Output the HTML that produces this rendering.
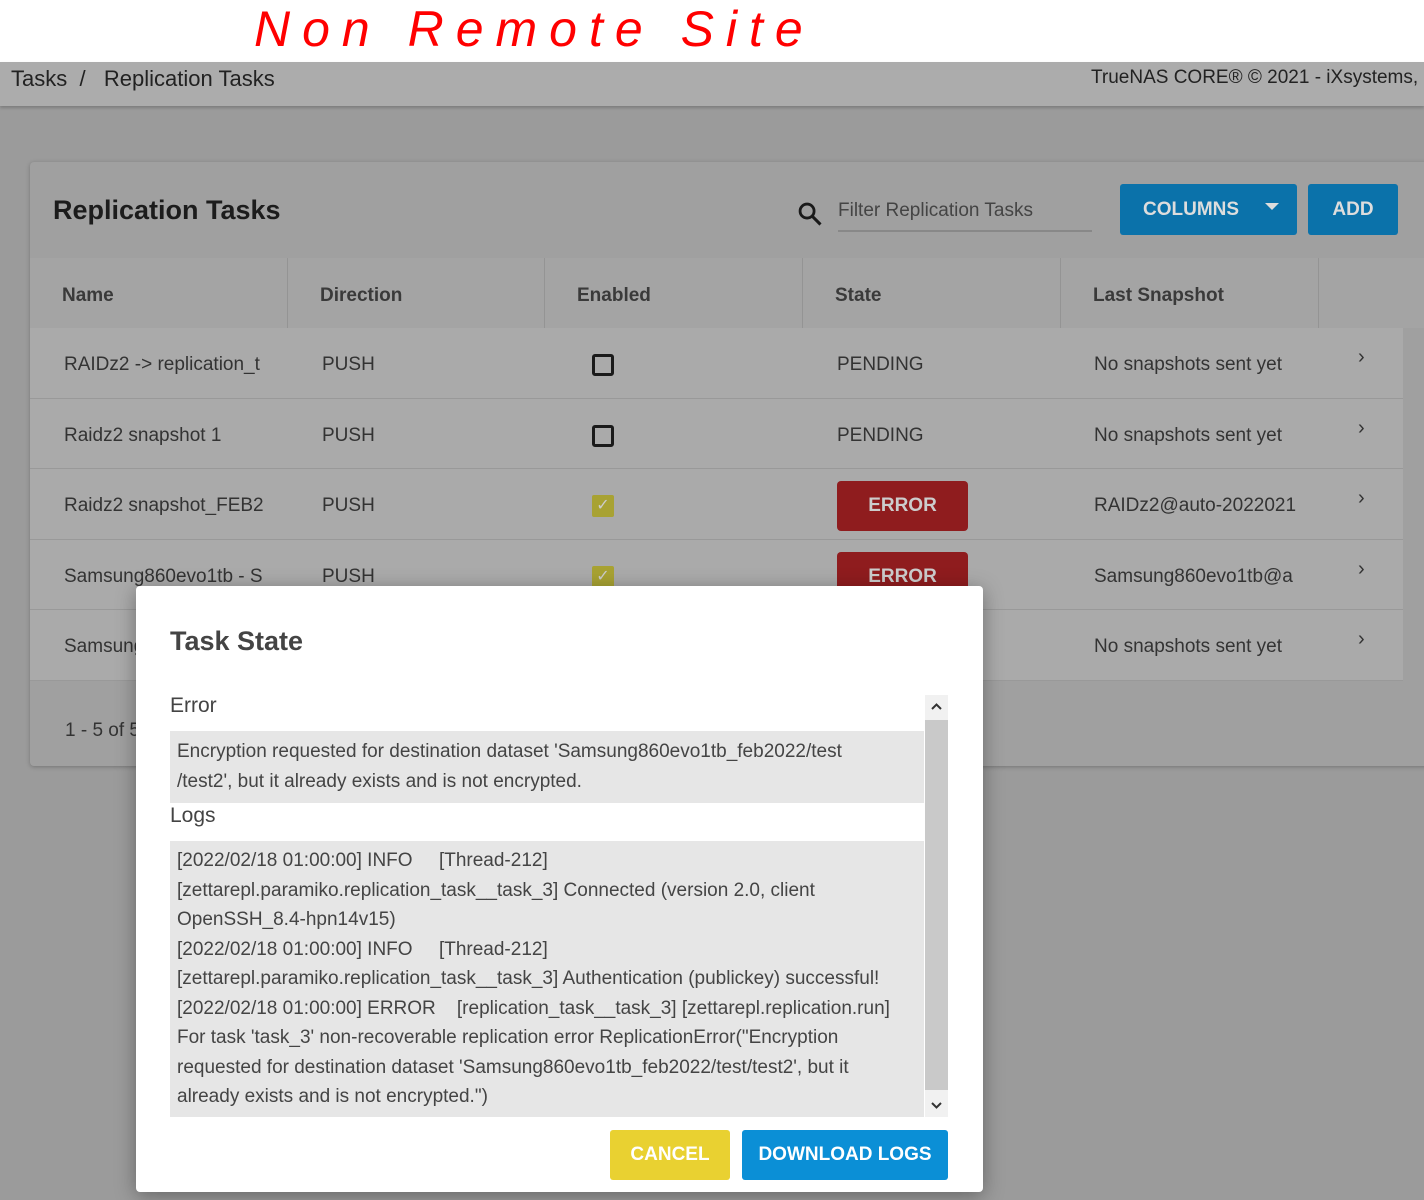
<!DOCTYPE html>
<html><head><meta charset="utf-8"><style>
*{box-sizing:border-box;margin:0;padding:0}
body{width:1424px;height:1200px;overflow:hidden;background:#9b9b9b;font-family:"Liberation Sans",sans-serif;position:relative;color:#222}
.abs{position:absolute}
#top{left:0;top:0;width:1424px;height:62px;background:#fff}
#hand{left:254px;top:0px;font-family:"Liberation Sans",sans-serif;font-size:50px;color:#f00;letter-spacing:12px;font-style:italic;font-weight:normal;-webkit-text-stroke:0px}
#bar{left:0;top:62px;width:1424px;height:44px;background:#acacac;box-shadow:0 2px 3px rgba(0,0,0,.2);font-size:22px;color:#222}
#card{left:30px;top:162px;width:1400px;height:604px;background:#a0a0a0;border-radius:4px;box-shadow:0 1px 4px rgba(0,0,0,.25);overflow:hidden}
.th{position:absolute;top:96px;height:70px;background:#a4a4a4;border-right:1px solid #949494;font-size:19px;font-weight:bold;color:#3a3a3a;padding:27px 0 0 32px}
.row{position:absolute;left:0;width:1373px;background:#aaa;border-bottom:1px solid #999;font-size:19px;color:#333}
.row span{position:absolute;top:26px}
.cb{position:absolute;left:562px;top:26px;width:22px;height:22px;border:3px solid #1a1a1a;border-radius:3px}
.cbc{position:absolute;left:562px;top:26px;width:22px;height:22px;background:#a8a233;border-radius:2px;color:#ccc;font-size:16px;text-align:center;line-height:22px}
.err{position:absolute;left:807px;top:12px;width:131px;height:50px;background:#8f1c1e;border-radius:4px;color:#ccc;font-size:19px;font-weight:bold;text-align:center;line-height:50px}
.chev{position:absolute;left:1328px;top:18px;font-size:20px;color:#333}
#dlg{left:136px;top:586px;width:847px;height:606px;background:#fff;border-radius:4px;box-shadow:0 4px 20px rgba(0,0,0,.35)}
.lbl{position:absolute;left:34px;font-size:21px;color:#444}
.box{position:absolute;left:34px;width:754px;background:#e6e6e6;font-size:19px;line-height:29.5px;color:#444;padding:6px 7px;white-space:nowrap}
.btn{position:absolute;top:544px;height:50px;border-radius:3px;font-size:19px;font-weight:bold;color:#fff;text-align:center;line-height:50px}
</style></head><body>
<div id="top" class="abs"></div>
<div id="hand" class="abs">Non Remote Site</div>
<div id="bar" class="abs"><span class="abs" style="left:11px;top:4px">Tasks&nbsp; /&nbsp;&nbsp; Replication Tasks</span><span class="abs" style="left:1091px;top:5px;font-size:19px;white-space:nowrap">TrueNAS CORE® © 2021 - iXsystems, Inc.</span></div>
<div id="card" class="abs">
 <div class="abs" style="left:23px;top:33px;font-size:27px;font-weight:bold;color:#1c1c1c">Replication Tasks</div>
 <svg class="abs" style="left:766px;top:38px" width="28" height="28" viewBox="0 0 24 24"><circle cx="9.5" cy="9.5" r="6" fill="none" stroke="#1a1a1a" stroke-width="2.4"/><path d="M14 14l7 7" stroke="#1a1a1a" stroke-width="2.6"/></svg>
 <div class="abs" style="left:808px;top:38px;font-size:19px;color:#444">Filter Replication Tasks</div>
 <div class="abs" style="left:808px;top:68px;width:254px;height:2px;background:#888"></div>
 <div class="abs" style="left:1090px;top:22px;width:177px;height:51px;background:#0b72aa;border-radius:3px;color:#ddd;font-weight:bold;font-size:19px;line-height:51px;padding-left:23px">COLUMNS<span class="abs" style="left:145px;top:19px;border-left:7px solid transparent;border-right:7px solid transparent;border-top:7px solid #ddd"></span></div>
 <div class="abs" style="left:1278px;top:22px;width:90px;height:51px;background:#0b72aa;border-radius:3px;color:#ddd;font-weight:bold;font-size:19px;line-height:51px;text-align:center">ADD</div>
 <div class="th" style="left:0;width:258px">Name</div>
 <div class="th" style="left:258px;width:257px">Direction</div>
 <div class="th" style="left:515px;width:258px">Enabled</div>
 <div class="th" style="left:773px;width:258px">State</div>
 <div class="th" style="left:1031px;width:258px">Last Snapshot</div>
 <div class="th" style="left:1289px;width:120px;border-right:none"></div>
 <div class="row" style="top:166px;height:71px"><span style="left:34px">RAIDz2 -&gt; replication_t</span><span style="left:292px">PUSH</span><div class="cb"></div><span style="left:807px">PENDING</span><span style="left:1064px">No snapshots sent yet</span><div class="chev">›</div></div>
 <div class="row" style="top:237px;height:70px"><span style="left:34px">Raidz2 snapshot 1</span><span style="left:292px">PUSH</span><div class="cb"></div><span style="left:807px">PENDING</span><span style="left:1064px">No snapshots sent yet</span><div class="chev">›</div></div>
 <div class="row" style="top:307px;height:71px"><span style="left:34px">Raidz2 snapshot_FEB2</span><span style="left:292px">PUSH</span><div class="cbc">✓</div><div class="err">ERROR</div><span style="left:1064px">RAIDz2@auto-2022021</span><div class="chev">›</div></div>
 <div class="row" style="top:378px;height:70px"><span style="left:34px">Samsung860evo1tb - S</span><span style="left:292px">PUSH</span><div class="cbc">✓</div><div class="err">ERROR</div><span style="left:1064px">Samsung860evo1tb@a</span><div class="chev">›</div></div>
 <div class="row" style="top:448px;height:71px"><span style="left:34px">Samsung</span><span style="left:1064px">No snapshots sent yet</span><div class="chev">›</div></div>
 <div class="abs" style="left:35px;top:558px;font-size:19px;color:#333">1 - 5 of 5</div>
</div>
<div id="dlg" class="abs">
 <div class="abs" style="left:34px;top:40px;font-size:27px;font-weight:bold;color:#444">Task State</div>
 <div class="lbl" style="top:108px">Error</div>
 <div class="box" style="top:145px;height:72px">Encryption requested for destination dataset 'Samsung860evo1tb_feb2022/test<br>/test2', but it already exists and is not encrypted.</div>
 <div class="lbl" style="top:218px">Logs</div>
 <div class="box" style="top:255px;height:276px;padding-top:5px">[2022/02/18 01:00:00] INFO &nbsp;&nbsp;&nbsp; [Thread-212]<br>[zettarepl.paramiko.replication_task__task_3] Connected (version 2.0, client<br>OpenSSH_8.4-hpn14v15)<br>[2022/02/18 01:00:00] INFO &nbsp;&nbsp;&nbsp; [Thread-212]<br>[zettarepl.paramiko.replication_task__task_3] Authentication (publickey) successful!<br>[2022/02/18 01:00:00] ERROR &nbsp;&nbsp; [replication_task__task_3] [zettarepl.replication.run]<br>For task 'task_3' non-recoverable replication error ReplicationError("Encryption<br>requested for destination dataset 'Samsung860evo1tb_feb2022/test/test2', but it<br>already exists and is not encrypted.")</div>
 <div class="abs" style="left:789px;top:109px;width:23px;height:422px;background:#f1f1f1"></div>
 <div class="abs" style="left:789px;top:134px;width:23px;height:370px;background:#c9c9c9"></div>
 <svg class="abs" style="left:793px;top:113px" width="15" height="15" viewBox="0 0 15 15"><path d="M3 10l4.5-4.5L12 10" fill="none" stroke="#333" stroke-width="2"/></svg>
 <svg class="abs" style="left:793px;top:512px" width="15" height="15" viewBox="0 0 15 15"><path d="M3 5l4.5 4.5L12 5" fill="none" stroke="#333" stroke-width="2"/></svg>
 <div class="btn" style="left:474px;width:120px;background:#e9d131">CANCEL</div>
 <div class="btn" style="left:606px;width:206px;background:#0b8fd6">DOWNLOAD LOGS</div>
</div>
</body></html>
